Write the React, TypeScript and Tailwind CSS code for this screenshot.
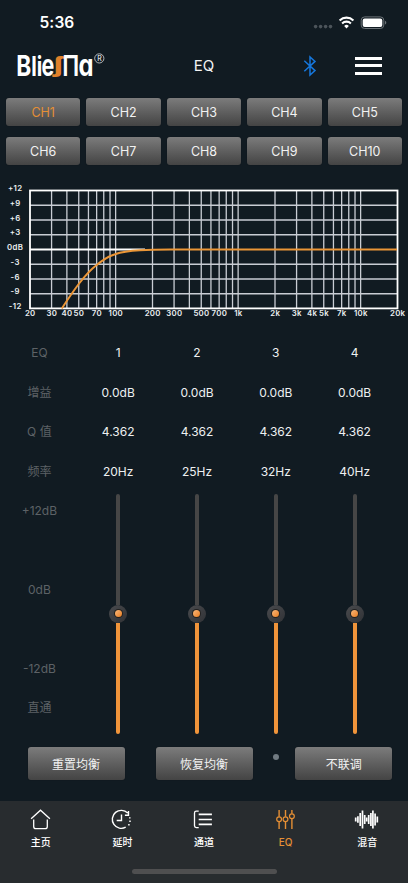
import React from "react";

const CHANNELS = ["CH1", "CH2", "CH3", "CH4", "CH5", "CH6", "CH7", "CH8", "CH9", "CH10"];

const ROWS = [
  { label: "EQ", values: ["1", "2", "3", "4"] },
  { label: "增益", values: ["0.0dB", "0.0dB", "0.0dB", "0.0dB"] },
  { label: "Q 值", values: ["4.362", "4.362", "4.362", "4.362"] },
  { label: "频率", values: ["20Hz", "25Hz", "32Hz", "40Hz"] },
];

const SCALE = ["+12dB", "", "0dB", "", "-12dB", "直通"];

const BUTTON =
  "rounded-[3px] bg-gradient-to-b from-[#7c7c7c] to-[#444444] text-[#f2f2f2] shadow-[0_0_1px_0_rgba(0,0,0,0.5)] flex items-center justify-center";

function StatusBar() {
  return (
    <div className="flex h-[46px] items-center justify-between pl-[39.5px] pr-[21px]">
      <span className="text-[15.5px] font-semibold leading-none tracking-[0.1px] text-white">5:36</span>
      <svg width="76" height="16" viewBox="0 0 76 16">
        <g fill="#4c545a">
          <circle cx="4.6" cy="11.6" r="1.8" />
          <circle cx="9.6" cy="11.6" r="1.8" />
          <circle cx="14.6" cy="11.6" r="1.8" />
          <circle cx="19.5" cy="11.6" r="1.8" />
        </g>
        <g fill="none" stroke="#fff" strokeWidth="2.1">
          <path d="M28.6 5.4a10 10 0 0 1 13.8 0" />
          <path d="M31.1 8.4a6.3 6.3 0 0 1 8.8 0" />
        </g>
        <path d="M35.5 13.4l-2.3-2.5a3.4 3.4 0 0 1 4.6 0z" fill="#fff" />
        <rect x="50.2" y="1.9" width="22.6" height="11.6" rx="3.4" fill="none" stroke="#6b7277" />
        <rect x="51.7" y="3.4" width="19.6" height="8.6" rx="2" fill="#fff" />
        <path d="M74 5.8c1.8.5 1.8 3.3 0 3.8z" fill="#6b7277" />
      </svg>
    </div>
  );
}

function Logo() {
  return (
    <svg
      width="94"
      height="38"
      viewBox="15 47 94 38"
      className="font-[Inter,'DejaVu_Sans',sans-serif]"
      fill="#fff"
      fontWeight="700"
      aria-label="BlieSNa"
    >
      <text x="16.2" y="76" fontSize="28.5" textLength="15" lengthAdjust="spacingAndGlyphs">B</text>
      <text x="31.2" y="76" fontSize="27" textLength="11" lengthAdjust="spacingAndGlyphs">li</text>
      <text x="41.6" y="75.8" fontSize="30" textLength="12.8" lengthAdjust="spacingAndGlyphs">e</text>
      <text
        x="53"
        y="71.6"
        fontSize="21.5"
        fill="#e0812b"
        textLength="10.5"
        lengthAdjust="spacingAndGlyphs"
        className="font-['Open_Sans','Noto_Sans',sans-serif]"
      >
        ʃ
      </text>
      <text x="62.2" y="76" fontSize="28.5" textLength="17" lengthAdjust="spacingAndGlyphs" fontWeight="600">П</text>
      <text x="78.4" y="75.8" fontSize="30" textLength="15" lengthAdjust="spacingAndGlyphs">ɑ</text>
      <circle cx="99.3" cy="58.4" r="4.6" fill="none" stroke="#d8dcde" strokeWidth="0.8" />
      <text x="99.4" y="61" fontSize="7" fontWeight="400" textAnchor="middle">R</text>
    </svg>
  );
}

function Header() {
  return (
    <header className="grid h-[51px] grid-cols-3 items-center pl-[15px] pr-[26px] pb-[12px]">
      <Logo />
      <span className="pl-[11px] text-center text-[15px] leading-none text-[#f4f4f4]">EQ</span>
      <div className="flex items-center justify-end gap-[38.5px]">
        <svg width="14" height="22" viewBox="0 0 14 22" fill="none" stroke="#1677dc" strokeWidth="1.5">
          <path d="M1.3 5.8L12 15.6L7 20V2L12 6.4L1.3 16.2" />
        </svg>
        <div className="flex w-[27px] flex-col gap-[4.5px]">
          <div className="h-[3px] bg-white" />
          <div className="h-[3px] bg-white" />
          <div className="h-[3px] bg-white" />
        </div>
      </div>
    </header>
  );
}

const X_LABELS: [number, string][] = [
  [20, "20"], [30, "30"], [40, "40"], [50, "50"], [70, "70"], [100, "100"],
  [200, "200"], [300, "300"], [500, "500"], [700, "700"], [1000, "1k"],
  [2000, "2k"], [3000, "3k"], [4000, "4k"], [5000, "5k"], [7000, "7k"], [10000, "10k"], [20000, "20k"],
];
const Y_LABELS = ["+12", "+9", "+6", "+3", "0dB", "-3", "-6", "-9", "-12"];
const LINES = [
  30, 40, 50, 60, 70, 80, 90, 100, 200, 300, 400, 500, 600, 700, 800, 900, 1000,
  2000, 3000, 4000, 5000, 6000, 7000, 8000, 9000, 10000,
];
const fx = (f: number) => 30 + (367.5 * Math.log10(f / 20)) / 3;

function Chart() {
  return (
    <svg width="408" height="140" viewBox="0 180 408 140" fill="none" className="block">
      <g stroke="#c9cdd4" strokeWidth="1.3">
        {LINES.map((f) => (
          <line key={f} x1={fx(f)} x2={fx(f)} y1="190" y2="308" />
        ))}
        {[1, 2, 3, 5, 6, 7].map((i) => (
          <line key={i} x1="30" x2="397.5" y1={190.5 + i * 14.75} y2={190.5 + i * 14.75} />
        ))}
      </g>
      <line x1="30" x2="145" y1="249.5" y2="249.5" stroke="#fff" strokeWidth="2" />
      <rect x="30" y="190.5" width="367.5" height="117.9" stroke="#fff" strokeWidth="1.8" />
      <path
        d="M61.8 308.5C67 300.5 72 293 78.7 284C84.5 276.5 90 270 96.7 265C102.5 260 108 256.5 115 254.2C121 252 130 250.7 140 250.2C150 249.6 158 249.5 170 249.5H397"
        stroke="#eb9637"
        strokeWidth="2"
      />
      <g fill="#eceff1" fontSize="7.8" fontWeight="600" textAnchor="middle">
        {Y_LABELS.map((t, i) => (
          <text key={t} x="15.2" y={191 + i * 14.75} letterSpacing="0.35">{t}</text>
        ))}
        {X_LABELS.map(([f, t]) => (
          <text key={t} x={fx(f) + 0.2} y="316.2" letterSpacing="0.3">{t}</text>
        ))}
      </g>
    </svg>
  );
}

function Slider() {
  return (
    <div className="flex h-[243px] flex-col items-center pt-[3px]">
      <div className="h-[111px] w-[4px] rounded-t-full bg-[#464646]" />
      <div className="flex size-[18px] items-center justify-center rounded-full bg-gradient-to-br from-[#4a4b4e] to-[#303236]">
        <div className="flex size-[9px] items-center justify-center rounded-full bg-[#22201f]">
          <div className="size-[7px] rounded-full bg-gradient-to-br from-[#f8b878] to-[#ea7d12]" />
        </div>
      </div>
      <div className="h-[111px] w-[4px] rounded-b-full bg-[#f0943a]" />
    </div>
  );
}

const GRID = "grid grid-cols-5";

function Tab({ label, active, children }: { label: string; active?: boolean; children: React.ReactNode }) {
  return (
    <div className={`flex flex-col items-center gap-[4px] pt-[7px] ${active ? "text-[#e58f35]" : "text-white"}`}>
      <svg width="26" height="24" viewBox="0.5 0 26 24" fill="none" stroke="currentColor" strokeWidth="1.2">
        {children}
      </svg>
      <span className="text-[10px] font-medium leading-[12px]">{label}</span>
    </div>
  );
}

const WAVE: [number, number][] = [
  [2.2, 4], [4.4, 6.5], [6.7, 13], [9, 18], [11.2, 9], [13.2, 4], [15.2, 9], [17.4, 13], [19.4, 18], [21.6, 12], [23.8, 6],
];

export default function App() {
  return (
    <div className="flex h-[883px] w-[408px] flex-col overflow-hidden bg-[#111b22] font-[Inter,'Noto_Sans_CJK_SC',sans-serif]">
      <StatusBar />
      <Header />
      <div className="grid h-[83px] grid-cols-5 content-start gap-x-[6px] gap-y-[11.5px] px-[6px] pt-[0.5px]">
        {CHANNELS.map((c, i) => (
          <div key={c} className={`${BUTTON} h-[28px] pt-[3px] text-[12.5px]`}>
            <span className={i === 0 ? "text-[#e58f35]" : ""}>{c}</span>
          </div>
        ))}
      </div>
      <Chart />
      <div className="w-[394px] pt-[13.3px]">
        {ROWS.map((r) => (
          <div key={r.label} className={`${GRID} h-[39.4px] items-center pt-[1px] text-center text-[12px]`}>
            <span className="text-[#5d6266]">{r.label}</span>
            {r.values.map((v, i) => (
              <span key={i} className="text-[#eef0f1]">{v}</span>
            ))}
          </div>
        ))}
        <div className={`${GRID} h-[243px]`}>
          <div className="text-center text-[12px] text-[#5d6266]">
            {SCALE.map((s, i) => (
              <div key={i} className="flex h-[39.4px] items-center justify-center pt-[1px]">{s}</div>
            ))}
          </div>
          <Slider />
          <Slider />
          <Slider />
          <Slider />
        </div>
      </div>
      <div className="mt-[13.5px] flex h-[53.2px] items-start pl-[27.5px] text-[12px]">
        <div className={`${BUTTON} h-[32.5px] w-[97px] pt-[2.5px]`}>重置均衡</div>
        <div className={`${BUTTON} ml-[31px] h-[32.5px] w-[97px] pt-[2.5px]`}>恢复均衡</div>
        <div className="ml-[20.3px] mt-[6.3px] size-[6px] rounded-full bg-[#717b82]" />
        <div className={`${BUTTON} ml-[16.5px] h-[32.5px] w-[97px] pt-[2.5px]`}>不联调</div>
      </div>
      <nav className="flex grow flex-col bg-[#282c2f]">
        <div className="grid h-[68.5px] grid-cols-5">
          <Tab label="主页">
            <path d="M3.6 10.8L13 2.2L22.4 10.8M6.2 11.5V18.4Q6.2 20.6 8.4 20.6H17.6Q19.8 20.6 19.8 18.4V11.5" strokeWidth="1.3" />
          </Tab>
          <Tab label="延时">
            <path d="M19.2 5A9 9 0 1 0 17.2 19.2M20 3V7.2H16.4M13 6.5V12.5H8.2" strokeWidth="1.4" />
            <path d="M21.3 9.2v1.4M21.5 12.6v1.4M20.4 16v1.4" strokeWidth="1.5" />
          </Tab>
          <Tab label="通道">
            <path d="M8.2 3.2H5.8Q4 3.2 4 5V17.8Q4 19.6 5.8 19.6H8.2" strokeWidth="1.3" />
            <path d="M8.2 6.3H21.4M8.2 11.5H21.4M8.2 16.4H21.4" strokeWidth="1.7" />
          </Tab>
          <Tab label="EQ" active>
            <path d="M6.6 2V8.8M6.6 13.6V21M13 2V8.8M13 13.6V21M19.4 2V5.8M19.4 10.6V21" strokeWidth="1.4" />
            <circle cx="6.6" cy="11.2" r="2.4" />
            <circle cx="13" cy="11.2" r="2.4" />
            <circle cx="19.4" cy="8.2" r="2.4" />
          </Tab>
          <Tab label="混音">
            {WAVE.map(([x, h]) => (
              <line key={x} x1={x} x2={x} y1={11.5 - h / 2} y2={11.5 + h / 2} strokeWidth="1.7" />
            ))}
          </Tab>
        </div>
        <div className="mx-auto h-[5px] w-[145px] rounded-full bg-[#4f4f50]" />
      </nav>
    </div>
  );
}
